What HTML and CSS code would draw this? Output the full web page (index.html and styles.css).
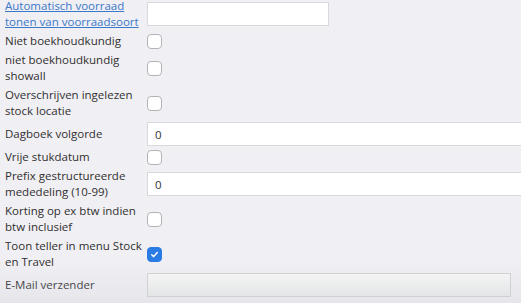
FILE: index.html
```html
<!DOCTYPE html>
<html lang="nl">
<head>
<meta charset="utf-8">
<title>Instellingen</title>
<link rel="stylesheet" href="styles.css">
</head>
<body>
<div class="form">
  <div class="row">
    <div class="lbl"><a href="#" class="link">Automatisch voorraad tonen van voorraadsoort</a></div>
    <div class="ctl"><input class="text short" type="text" value=""></div>
  </div>
  <div class="row">
    <div class="lbl">Niet boekhoudkundig</div>
    <div class="ctl"><span class="cb"></span></div>
  </div>
  <div class="row">
    <div class="lbl">niet boekhoudkundig showall</div>
    <div class="ctl"><span class="cb"></span></div>
  </div>
  <div class="row">
    <div class="lbl">Overschrijven ingelezen stock locatie</div>
    <div class="ctl"><span class="cb"></span></div>
  </div>
  <div class="row">
    <div class="lbl">Dagboek volgorde</div>
    <div class="ctl"><input class="text wide" type="text" value="0"></div>
  </div>
  <div class="row">
    <div class="lbl">Vrije stukdatum</div>
    <div class="ctl"><span class="cb"></span></div>
  </div>
  <div class="row">
    <div class="lbl">Prefix gestructureerde mededeling (10-99)</div>
    <div class="ctl"><input class="text wide" type="text" value="0"></div>
  </div>
  <div class="row">
    <div class="lbl">Korting op ex btw indien btw inclusief</div>
    <div class="ctl"><span class="cb"></span></div>
  </div>
  <div class="row">
    <div class="lbl">Toon teller in menu Stock en Travel</div>
    <div class="ctl"><span class="cb checked"><svg viewBox="0 0 16 16" width="16" height="16"><path d="M4.6 8.3 L7 10.6 L11.4 5.6" fill="none" stroke="#fff" stroke-width="1.8" stroke-linecap="round" stroke-linejoin="round"/></svg></span></div>
  </div>
  <div class="row">
    <div class="lbl">E-Mail verzender</div>
    <div class="ctl"><input class="text email" type="text" value="" readonly></div>
  </div>
</div>
<div class="fade"></div>
</body>
</html>
```
FILE: styles.css
```css
html, body {
  margin: 0;
  padding: 0;
}
body {
  background: #f0eff4;
  font-family: "Open Sans", "Liberation Sans", sans-serif;
  font-size: 11.5px;
  color: #303030;
  overflow: hidden;
  width: 521px;
  height: 303px;
}
.form {
  display: flex;
  flex-direction: column;
  gap: 3px;
  margin-top: -2px;
}
.row {
  display: grid;
  grid-template-columns: 147px 1fr;
  align-items: center;
}
.lbl {
  padding-left: 5px;
  padding-right: 2px;
  line-height: 16px;
}
.link {
  color: #3a78c8;
  text-decoration: underline;
}
.ctl {
  display: flex;
  align-items: center;
  min-width: 0;
}
.text {
  box-sizing: border-box;
  height: 24px;
  border: 1px solid #d9d9dc;
  background: #fff;
  font: inherit;
  color: #333;
  padding: 0 7px;
  margin: 0;
  outline: none;
}
.short {
  width: 182px;
}
.wide {
  width: calc(100% + 12px);
  flex: none;
}
.email {
  width: 364px;
  background: linear-gradient(#f8f8f8, #ececec);
  border-color: #d2d2d4;
}
.cb {
  box-sizing: border-box;
  width: 15px;
  height: 15px;
  border: 1px solid #b3b3b6;
  border-radius: 4px;
  background: #fff;
  display: inline-flex;
  align-items: center;
  justify-content: center;
}
.cb.checked {
  background: #2b7be4;
  border-color: #2b7be4;
}
.cb svg {
  width: 13px;
  height: 13px;
}
.fade {
  position: fixed;
  left: 0;
  right: 0;
  bottom: 0;
  height: 42px;
  pointer-events: none;
  background: linear-gradient(rgba(220,235,230,0), rgba(200,205,210,0.25));
}
```
